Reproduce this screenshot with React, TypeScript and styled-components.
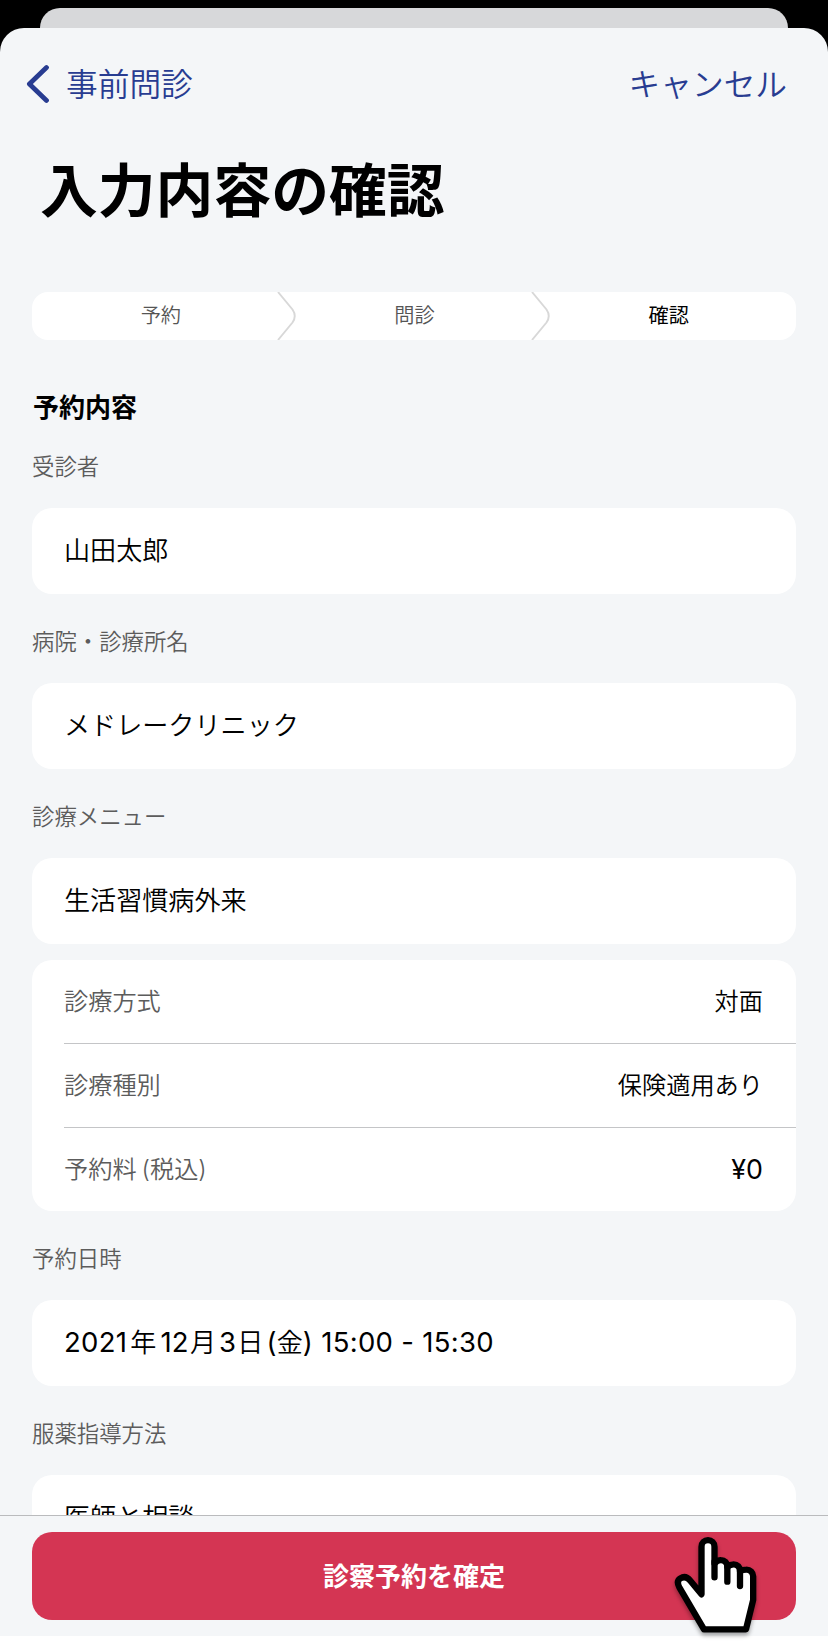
import React from 'react';
import styled, { createGlobalStyle } from 'styled-components';

const GlobalStyle = createGlobalStyle`
  * { box-sizing: border-box; }
  body {
    margin: 0;
    background: #fff;
    color: #000;
    font-family: Inter, "Noto Sans CJK JP", sans-serif;
  }
`;

const Screen = styled.div`
  position: relative;
  width: 828px;
  height: 1641px;
  overflow: hidden;
  background: #fff;
`;

const Backdrop = styled.div`
  height: 1636px;
  padding-top: 8px;
  background: #000;
  display: flex;
  flex-direction: column;
`;

const BackSheet = styled.div`
  flex: none;
  height: 20px;
  margin: 0 40px;
  border-radius: 20px 20px 0 0;
  background: #d7d8da;
`;

const Sheet = styled.main`
  flex: 1;
  min-height: 0;
  display: flex;
  flex-direction: column;
  overflow: hidden;
  border-radius: 24px 24px 0 0;
  background: #f4f6f8;
`;

const NavBar = styled.nav`
  flex: none;
  display: flex;
  justify-content: space-between;
  align-items: center;
  height: 112px;
  padding: 0 41px 0 26px;
`;

const NavButton = styled.button`
  display: flex;
  align-items: center;
  gap: 16px;
  padding: 0;
  border: 0;
  background: none;
  color: #283c91;
  font: 350 31.7px/40px Inter, "Noto Sans CJK JP", sans-serif;
`;

const NavText = styled.span`
  padding-top: 1px;
`;

const Title = styled.h1`
  flex: none;
  height: 152px;
  margin: 0;
  padding: 11px 0 0 40px;
  font-size: 57.8px;
  font-weight: 700;
  line-height: 80px;
`;

const Steps = styled.ol`
  flex: none;
  display: grid;
  grid-template-columns: repeat(3, 1fr);
  height: 48px;
  margin: 0 32px;
  padding: 0;
  list-style: none;
  border-radius: 16px;
  background: #fff;
`;

const Step = styled.li<{ $active?: boolean }>`
  position: relative;
  text-align: center;
  font-size: 20.2px;
  line-height: 48px;
  padding-left: ${(p) => (p.$active ? 0 : 1)}px;
  &:first-child {
    padding-left: 3px;
  }
  font-weight: ${(p) => (p.$active ? 400 : 350)};
  color: ${(p) => (p.$active ? '#000' : '#555')};
`;

const StepArrow = styled.svg`
  position: absolute;
  top: 0;
  right: -10px;
`;

const Body = styled.div`
  flex: 1;
  min-height: 0;
  overflow: hidden;
  padding: 50px 32px 0;
`;

const SectionTitle = styled.h2`
  margin: 0;
  height: 36px;
  padding-left: 1px;
  font-size: 26px;
  font-weight: 700;
  line-height: 36px;
`;

const Label = styled.div<{ $first?: boolean }>`
  height: ${(p) => (p.$first ? 82 : 89)}px;
  padding-top: ${(p) => (p.$first ? 25 : 32)}px;
  color: #5c5c5c;
  font-size: 22.4px;
  font-weight: 350;
  line-height: 32px;
`;

const Card = styled.div`
  height: 86px;
  padding-left: 32px;
  border-radius: 20px;
  background: #fff;
  font-size: 26.1px;
  font-weight: 350;
  line-height: 86px;
  white-space: pre;
`;

const Details = styled.dl`
  margin: 16px 0 0;
  padding-left: 32px;
  border-radius: 20px;
  background: #fff;
`;

const DetailRow = styled.div`
  display: flex;
  justify-content: space-between;
  height: 84px;
  padding-right: 33px;
  border-bottom: 1px solid #c4c5c7;
  font-size: 24.2px;
  font-weight: 350;
  line-height: 84px;
  &:last-child {
    height: 83px;
    border-bottom: 0;
  }
`;

const Term = styled.dt`
  color: #5c5c5c;
`;

const Value = styled.dd<{ $large?: boolean }>`
  margin: 0;
  font-size: ${(p) => (p.$large ? 26.8 : 24.2)}px;
  font-weight: ${(p) => (p.$large ? 400 : 350)};
  line-height: ${(p) => (p.$large ? 82 : 84)}px;
`;

const Gap = styled.span<{ $w: number }>`
  margin-left: ${(p) => p.$w}px;
`;

const DateCard = styled(Card)`
  line-height: 84px;
`;

const Num = styled.span<{ $w?: number }>`
  margin-left: ${(p) => p.$w ?? 0}px;
  font-size: 27.5px;
  font-weight: 400;
  letter-spacing: 0.3px;
`;

const Footer = styled.footer`
  flex: none;
  height: 121px;
  padding: 16px 32px;
  border-top: 1px solid #babbbd;
`;

const ConfirmButton = styled.button`
  display: block;
  width: 100%;
  height: 88px;
  padding: 1px 0 0;
  border: 0;
  border-radius: 20px;
  background: #d43553;
  color: #fff;
  font: 700 26px/87px Inter, "Noto Sans CJK JP", sans-serif;
`;

const Pointer = styled.svg`
  position: absolute;
  left: 670px;
  top: 1530px;
  overflow: visible;
  filter: drop-shadow(0 3px 2px rgba(0, 0, 0, 0.35));
`;

const Arrow = () => (
  <StepArrow width="20" height="48" viewBox="0 0 20 48" fill="none">
    <path d="M1 0L15.5 17.5Q20 24 15.5 30.5L1 48" stroke="#d8d8d8" strokeWidth="1.9" />
  </StepArrow>
);

export default function App() {
  return (
    <>
      <GlobalStyle />
      <Screen lang="ja">
        <Backdrop>
          <BackSheet />
          <Sheet>
            <NavBar>
              <NavButton>
                <svg width="24" height="38" viewBox="0 0 24 38" fill="none">
                  <path d="M20.5 2.6L3.4 19l17.1 16.4" stroke="#283c91" strokeWidth="4.8" strokeLinecap="round" strokeLinejoin="round" />
                </svg>
                <NavText>事前問診</NavText>
              </NavButton>
              <NavButton><NavText>キャンセル</NavText></NavButton>
            </NavBar>
            <Title>入力内容の確認</Title>
            <Steps>
              <Step>予約<Arrow /></Step>
              <Step>問診<Arrow /></Step>
              <Step $active>確認</Step>
            </Steps>
            <Body>
              <SectionTitle>予約内容</SectionTitle>
              <Label $first>受診者</Label>
              <Card>山田太郎</Card>
              <Label>病院・診療所名</Label>
              <Card>メドレークリニック</Card>
              <Label>診療メニュー</Label>
              <Card>生活習慣病外来</Card>
              <Details>
                <DetailRow><Term>診療方式</Term><Value>対面</Value></DetailRow>
                <DetailRow><Term>診療種別</Term><Value>保険適用あり</Value></DetailRow>
                <DetailRow><Term>予約料<Gap $w={5}>(税込)</Gap></Term><Value $large>¥0</Value></DetailRow>
              </Details>
              <Label>予約日時</Label>
              <DateCard>
                <Num>2021</Num><Gap $w={3}>年</Gap><Num $w={4}>12</Num><Gap $w={1}>月</Gap><Num $w={3}>3</Num><Gap $w={1}>日</Gap><Num $w={3}>(</Num>金<Num>) 15:00 - 15:30</Num>
              </DateCard>
              <Label>服薬指導方法</Label>
              <Card>医師と相談</Card>
            </Body>
            <Footer>
              <ConfirmButton>診察予約を確定</ConfirmButton>
            </Footer>
          </Sheet>
        </Backdrop>
        <Pointer width="90" height="105" viewBox="90 90 270 315" fill="none" stroke="#000" strokeWidth="19" strokeLinecap="round" strokeLinejoin="round">
          <path fill="#fff" d="M192 388L118 262Q108 243 121 235Q137 225 151 242L184.5 283V140A19.5 19.5 0 0 1 223.5 140V190Q234 180 243 180.5A19 19 0 0 1 262 200Q272 193 281 193A19 19 0 0 1 300 213Q310 209 319 209A20 20 0 0 1 339.5 229V300L318 388Z" />
          <path d="M223.5 185V232M262 197V245M300 210V258" />
        </Pointer>
      </Screen>
    </>
  );
}
